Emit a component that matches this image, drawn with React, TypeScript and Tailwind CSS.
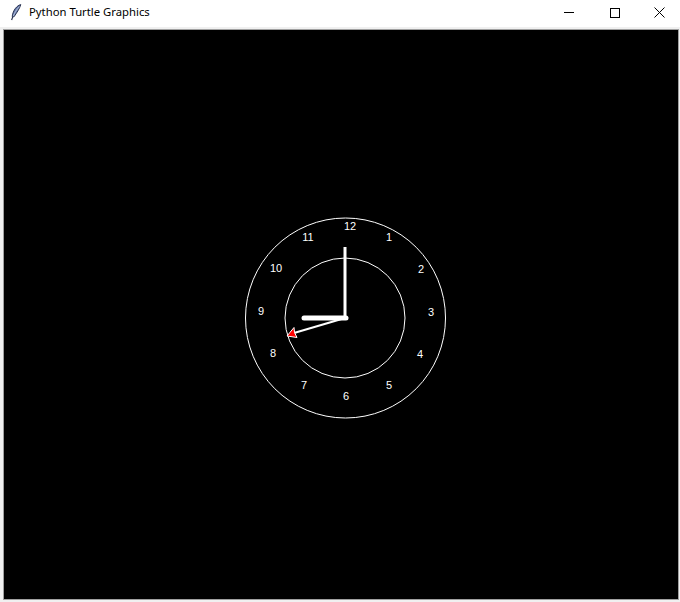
const numerals = [
  { n: "12", x: 350, y: 226 },
  { n: "1", x: 389, y: 237 },
  { n: "2", x: 421, y: 269 },
  { n: "3", x: 431, y: 312 },
  { n: "4", x: 420, y: 354 },
  { n: "5", x: 389, y: 385 },
  { n: "6", x: 346, y: 396 },
  { n: "7", x: 304, y: 385 },
  { n: "8", x: 273, y: 353 },
  { n: "9", x: 261, y: 311 },
  { n: "10", x: 276, y: 268 },
  { n: "11", x: 308, y: 237 },
];

// quill icon in the window title
const Feather = () => (
  <svg width="12" height="17" viewBox="0 0 12 17">
    <path d="M10.8 0.6 C7 1.5 3 6 2.2 12.5 L4 12.8 C6.5 9 9.5 5 10.8 0.6 Z" fill="#6b7fae" stroke="#1c2645" strokeWidth="0.9" />
    <path d="M9.5 2.5 C6.5 5.5 4.5 9 3.2 12.4" stroke="#c8d2ea" strokeWidth="0.7" fill="none" />
    <path d="M2.8 12.6 L1.6 16" stroke="#1c2645" strokeWidth="1.1" />
  </svg>
);

const TitleBar = () => (
  <div className="flex h-[27px] items-center bg-white pb-[2px]">
    <div className="ml-[9px] flex w-[14px] justify-center">
      <Feather />
    </div>
    <span className="ml-[6px] text-[11.3px] text-black" style={{ fontFamily: '"Noto Sans", "Liberation Sans", sans-serif' }}>
      Python Turtle Graphics
    </span>
    <div className="ml-auto flex h-full">
      <div className="flex w-[46px] items-center justify-center">
        <div className="h-px w-[10px] bg-black" />
      </div>
      <div className="flex w-[46px] items-center justify-center">
        <div className="h-[10px] w-[10px] border border-black" />
      </div>
      <div className="flex w-[42px] items-center justify-center">
        <svg width="11" height="11" viewBox="0 0 11 11">
          <path d="M0.5 0.5 L10.5 10.5 M10.5 0.5 L0.5 10.5" stroke="#000" strokeWidth="1" />
        </svg>
      </div>
    </div>
  </div>
);

const Clock = () => (
  <svg width="674" height="569" viewBox="4 30 674 569" className="block">
    <circle cx="345.5" cy="318" r="100" fill="none" stroke="#fff" strokeWidth="1" />
    <circle cx="345" cy="318" r="60" fill="none" stroke="#fff" strokeWidth="1" />
    {numerals.map((d) => (
      <text
        key={d.n}
        x={d.x}
        y={d.y}
        fill="#fff"
        fontSize="11"
        textAnchor="middle"
        dominantBaseline="central"
        fontFamily='"Liberation Sans", Arial, sans-serif'
      >
        {d.n}
      </text>
    ))}
    <line x1="345" y1="318" x2="345" y2="247" stroke="#fff" strokeWidth="3" />
    <line x1="304" y1="318" x2="346" y2="318" stroke="#fff" strokeWidth="5" strokeLinecap="round" />
    <line x1="345" y1="318" x2="294" y2="333" stroke="#fff" strokeWidth="2" />
    <polygon points="287,336 297,337.5 294.5,332.5 294,327.5" fill="#ff0000" stroke="#fff" strokeWidth="1" />
  </svg>
);

export default function App() {
  return (
    <div className="h-[602px] w-[680px] overflow-hidden bg-[#f0f0f0]">
      <TitleBar />
      <div className="pl-[3px] pr-[1px] pt-[2px] pb-[2px]">
        <div className="h-[571px] w-[676px] border border-[#a0a0a0] bg-black">
          <Clock />
        </div>
      </div>
    </div>
  );
}
